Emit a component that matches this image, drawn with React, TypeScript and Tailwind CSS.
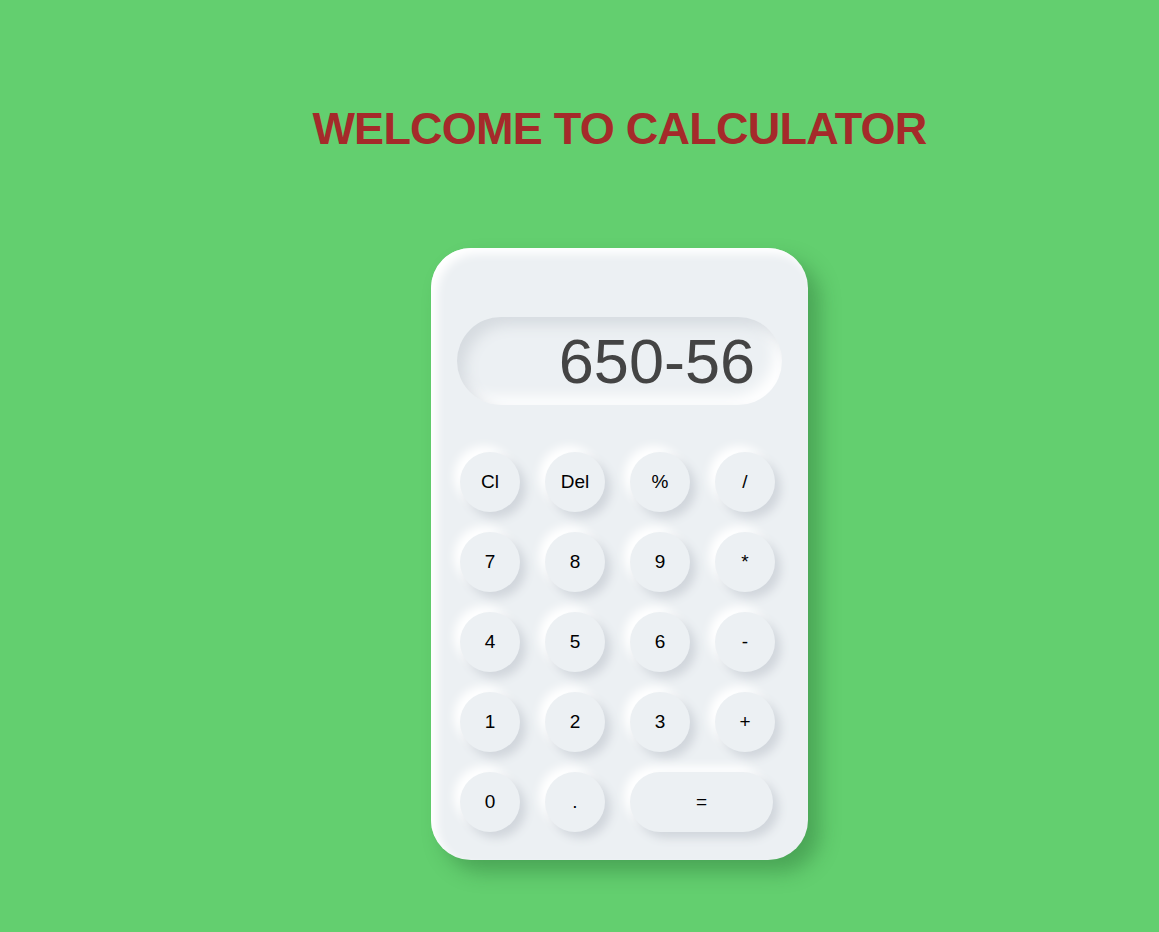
const keys: { label: string; wide?: boolean }[] = [
  { label: "Cl" }, { label: "Del" }, { label: "%" }, { label: "/" },
  { label: "7" }, { label: "8" }, { label: "9" }, { label: "*" },
  { label: "4" }, { label: "5" }, { label: "6" }, { label: "-" },
  { label: "1" }, { label: "2" }, { label: "3" }, { label: "+" },
  { label: "0" }, { label: "." }, { label: "=", wide: true },
];

export default function App() {
  return (
    <div className="min-h-screen bg-[#63cf6f] font-['Liberation_Sans',Arial,sans-serif]">
      <div className="flex flex-col items-center pl-[80px] pt-[106px] pb-[72px]">
        <h1 className="text-[45px] leading-[45px] tracking-[-0.75px] font-bold text-[#a52a2a]">WELCOME TO CALCULATOR</h1>

        <div className="mt-[97px] w-[377px] rounded-[40px] bg-[#ecf0f3] pt-[69px] pb-[28px] pl-[26px] pr-[26px] shadow-[12px_12px_20px_rgba(30,90,40,0.35),inset_6px_6px_10px_#ffffff]">
          <div className="h-[88px] rounded-full flex items-center justify-end pr-[27px] shadow-[inset_8px_8px_14px_#d6dbe0,inset_-8px_-8px_14px_#ffffff]">
            <span className="text-[63px] text-[#444444] leading-none">650-56</span>
          </div>

          <div className="mt-[47px] pl-[3px] grid grid-cols-[60px_60px_60px_60px] gap-x-[25px] gap-y-[20px]">
            {keys.map((k) => (
              <button
                key={k.label}
                className={`h-[60px] rounded-full bg-[#ecf0f3] text-[19px] text-black flex items-center justify-center shadow-[6px_6px_10px_#d1d6dc,-6px_-6px_10px_#ffffff] ${k.wide ? "col-span-2 w-[143px]" : "w-[60px]"}`}
              >
                {k.label}
              </button>
            ))}
          </div>
        </div>
      </div>
    </div>
  );
}
